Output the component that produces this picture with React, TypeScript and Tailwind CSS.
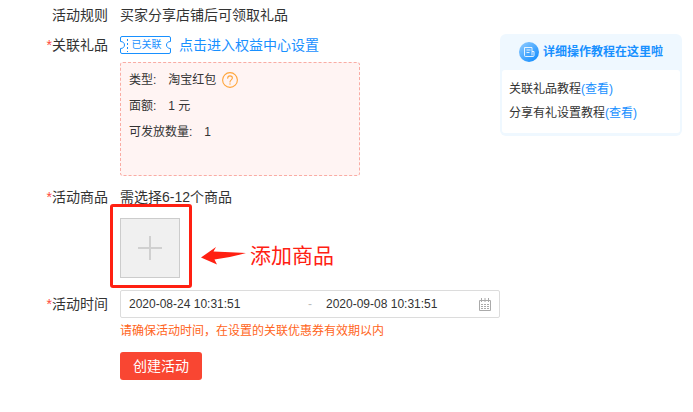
import React, { useState } from 'react';

const tutorials = [
  { name: '关联礼品教程', href: '#gift' },
  { name: '分享有礼设置教程', href: '#share' },
];

const giftInfo = [
  { label: '类型:', value: '淘宝红包', help: true },
  { label: '面额:', value: '1 元' },
  { label: '可发放数量:', value: '1' },
];

const CouponTag = () => (
  <span className="relative flex h-5 w-[51px] items-center justify-center text-[10px] leading-5 text-[#1890ff]">
    <svg className="absolute inset-0" width="51" height="20" viewBox="0 0 51 20" fill="none" stroke="#1890ff">
      <path d="M2 1.5H49Q50.500 1.500 50.500 3V6.500C48 6.500 46.500 8 46.500 10S48 13.500 50.500 13.500V17Q50.500 18.500 49 18.500H2Q0.500 18.500 0.500 17V13.500C3 13.500 4.500 12 4.500 10S3 6.500 0.500 6.500V3Q0.500 1.500 2 1.500Z" />
      <path d="M7.500 4V17" strokeDasharray="2 2" />
    </svg>
    <span className="pl-[2px]">已关联</span>
  </span>
);

const HelpIcon = () => (
  <svg width="16" height="16" viewBox="0 0 16 16" fill="none" stroke="#ffa53a" strokeLinecap="round">
    <circle cx="8" cy="8" r="7.400" strokeWidth="1.100" />
    <path d="M5.700 6.300C5.700 4.800 6.600 3.900 8 3.900S10.400 4.800 10.400 6.100C10.400 7.800 8 7.900 8 9.900" strokeWidth="1.100" />
    <path d="M8 12V12.100" strokeWidth="1.300" />
  </svg>
);

const GuideIcon = () => (
  <svg width="20" height="20" viewBox="0 0 20 20" fill="none">
    <defs>
      <linearGradient id="guide" x1="3" y1="2" x2="17" y2="18" gradientUnits="userSpaceOnUse">
        <stop stopColor="#83c5ff" />
        <stop offset="1" stopColor="#1890ff" />
      </linearGradient>
    </defs>
    <circle cx="10" cy="10" r="10" fill="url(#guide)" />
    <path d="M13 9.500V5.500H5.500V13.500Q5.500 14.500 6.500 14.500H14Q15 14.500 15 13.500V9.500H13V13.500" stroke="#fff" strokeOpacity="0.85" />
    <path d="M7.500 8H11.500M7.500 10.500H10.500" stroke="#fff" strokeOpacity="0.85" />
  </svg>
);

const CalendarIcon = () => (
  <svg width="12" height="13" viewBox="0 0 12 13" fill="none" stroke="#aaa">
    <path d="M0.500 2.500H11.500V12.500H0.500Z" />
    <path d="M2.500 0V4M6 0V4M9.500 0V4" />
    <path d="M2 6.500H10M2 8.500H10M2 10.500H10" strokeDasharray="2 1" />
  </svg>
);

const ArrowIcon = () => (
  <svg width="45" height="18" viewBox="0 0 45 18" fill="#ff2012">
    <path d="M0 10.500L15 0L12.500 4.500Q30 5 45 6Q30 10.500 13.500 12.500L16 17.500Z" />
  </svg>
);

const Label = ({ text, required, htmlFor }: { text: string; required?: boolean; htmlFor?: string }) => {
  const Tag = htmlFor ? 'label' : 'div';
  return (
    <Tag htmlFor={htmlFor} className="block w-[108px] shrink-0 text-right leading-5">
      {required && <span className="text-[#ff4a3a]">*</span>}
      {text}
    </Tag>
  );
};

const App: React.FC = () => {
  const [start, setStart] = useState('2020-08-24 10:31:51');
  const [end, setEnd] = useState('2020-09-08 10:31:51');

  return (
    <div className="flex items-start bg-white font-['Liberation_Sans','Noto_Sans_CJK_SC',sans-serif] text-sm text-[#333]">
      <form className="min-w-0 flex-1 pt-[5px] pb-8" onSubmit={(e) => e.preventDefault()}>
        <div className="flex gap-3">
          <Label text="活动规则" />
          <div className="leading-5">买家分享店铺后可领取礼品</div>
        </div>

        <div className="mt-[10px] flex gap-3">
          <Label text="关联礼品" required />
          <div className="flex-1">
            <div className="flex h-5 items-center gap-2">
              <CouponTag />
              <a href="#rights" className="leading-5 text-[#1890ff]">点击进入权益中心设置</a>
            </div>
            <div className="mt-[7px] flex h-[114px] max-w-[240px] flex-col gap-[6px] rounded-[3px] border border-dashed border-[#f9aca4] bg-[#fff4f3] px-2 pt-[7px] text-xs">
              {giftInfo.map((item) => (
                <div key={item.label} className="flex h-5 items-center">
                  <span className="mr-3">{item.label}</span>
                  <span className="mr-[6px]">{item.value}</span>
                  {item.help && <HelpIcon />}
                </div>
              ))}
            </div>
          </div>
        </div>

        <div className="mt-[11px] flex gap-3">
          <Label text="活动商品" required />
          <div className="flex-1">
            <div className="leading-5">需选择6-12个商品</div>
            <div className="mt-[11px] flex items-start">
              <div className="relative">
                <button type="button" aria-label="添加商品" className="flex size-[60px] items-center justify-center border border-[#ccc] bg-[#f0f0f0]">
                  <svg width="24" height="24" viewBox="0 0 24 24" stroke="#d0d0d0" strokeWidth="2">
                    <path d="M12 0V24M0 12H24" />
                  </svg>
                </button>
                <div className="pointer-events-none absolute -top-[14px] -right-3 -bottom-[10px] -left-[10px] rounded-[3px] border-3 border-[#ff2012]" />
              </div>
              <div className="ml-[21px] flex items-center gap-1 pt-6 text-[21px] leading-7 text-[#ff2012]">
                <ArrowIcon />
                添加商品
              </div>
            </div>
          </div>
        </div>

        <div className="mt-3 flex gap-3">
          <div className="shrink-0 pt-1">
            <Label text="活动时间" required htmlFor="start" />
          </div>
          <div className="min-w-0 flex-1">
            <div className="flex h-7 items-center rounded-[2px] border border-[#dcdcdc] px-2 text-xs">
              <input id="start" value={start} onChange={(e) => setStart(e.target.value)} className="min-w-0 flex-1 outline-none" />
              <span className="w-5 text-center text-[#bbb]">-</span>
              <input aria-label="结束时间" value={end} onChange={(e) => setEnd(e.target.value)} className="ml-[6px] w-[153px] outline-none" />
              <CalendarIcon />
            </div>
            <p className="mt-[3px] text-xs leading-5 text-[#ff6421]">请确保活动时间，在设置的关联优惠券有效期以内</p>
            <button type="submit" className="mt-[11px] h-7 rounded-[3px] bg-[#f94632] px-[13px] text-white">创建活动</button>
          </div>
        </div>
      </form>

      <aside className="mt-[34px] mr-[11px] w-[182px] shrink-0 rounded-md bg-[#eff8ff] px-[2px] pb-[3px] text-xs">
        <h2 className="flex h-9 items-center justify-center gap-1 font-bold text-[#1890ff]">
          <GuideIcon />
          详细操作教程在这里啦
        </h2>
        <ul className="flex flex-col gap-1 rounded-[3px] bg-white px-[7px] pt-[9px] pb-[10px]">
          {tutorials.map((item) => (
            <li key={item.name} className="leading-5">
              {item.name}
              <a href={item.href} className="text-[#1890ff]">(查看)</a>
            </li>
          ))}
        </ul>
      </aside>
    </div>
  );
};

export default App;
